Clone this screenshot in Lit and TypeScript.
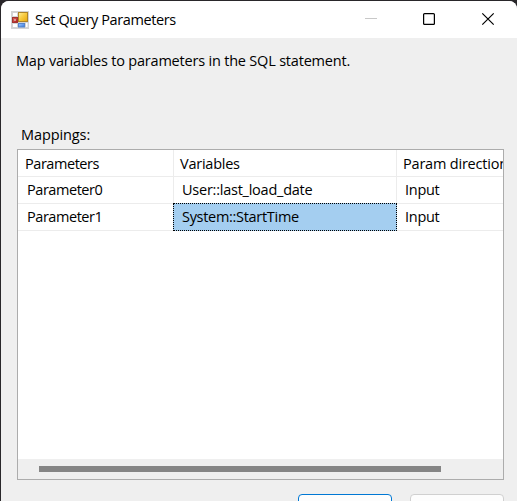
import { LitElement, html, css } from "lit";
import { customElement, property } from "lit/decorators.js";
import { classMap } from "lit/directives/class-map.js";

interface Mapping {
  parameter: string;
  variable: string;
  direction: string;
  selected?: boolean;
}

@customElement("title-bar")
class TitleBar extends LitElement {
  @property() heading = "";

  static styles = css`
    :host {
      display: flex;
      align-items: center;
      height: 37px;
      box-sizing: border-box;
      padding-left: 10px;
      background: #fff;
    }
    .logo { width: 18px; height: 18px; flex: none; }
    .heading {
      flex: 1;
      margin-left: 6px;
      line-height: 20px;
      letter-spacing: -0.4px;
      white-space: nowrap;
    }
    .controls { display: flex; }
    .control { width: 58px; height: 37px; display: block; }
    .middle { width: 59px; }
  `;

  render() {
    return html`
      <svg class="logo" viewBox="0 0 18 18">
        <defs>
          <linearGradient id="gold" x1="0" y1="0" x2="1" y2="1">
            <stop offset="0" stop-color="#fff0a0" />
            <stop offset=".45" stop-color="#f8cc42" />
            <stop offset="1" stop-color="#e6a60c" />
          </linearGradient>
          <linearGradient id="blue" x1="0" y1="0" x2="1" y2="1">
            <stop offset="0" stop-color="#a4ccff" />
            <stop offset="1" stop-color="#3274dc" />
          </linearGradient>
          <linearGradient id="red" x1="0" y1="0" x2="1" y2="1">
            <stop offset="0" stop-color="#e06a60" />
            <stop offset="1" stop-color="#a81818" />
          </linearGradient>
        </defs>
        <rect width="18" height="18" fill="#d3d3d3" />
        <path d="M2 2h4v3H2zM2 13h4v3H2zM15 12h1.500v4H15z" fill="#fff" />
        <rect x="7.500" y="1.500" width="9" height="9" fill="url(#gold)" stroke="#ae8426" />
        <rect x="1.500" y="6.500" width="5" height="5" fill="url(#red)" stroke="#a23230" />
        <path d="M3 8h2v2H3z" fill="#d99a94" />
        <rect x="7.500" y="12.500" width="6" height="3.500" fill="url(#blue)" stroke="#5685ca" />
      </svg>
      <div class="heading">${this.heading}</div>
      <div class="controls">
        <svg class="control" viewBox="0 0 58 37">
          <path d="M23 17.500h12" stroke="#c8c8c8" />
        </svg>
        <svg class="control middle" viewBox="0 0 59 37">
          <rect x="23.600" y="12.600" width="10.800" height="10.800" rx="1" fill="none" stroke="#000" stroke-width="1.250" />
        </svg>
        <svg class="control" viewBox="0 0 58 37">
          <path d="M23.300 12.300l11.400 11.400M34.700 12.300l-11.400 11.400" stroke="#000" stroke-width="1.200" />
        </svg>
      </div>
    `;
  }
}

@customElement("mapping-grid")
class MappingGrid extends LitElement {
  @property({ attribute: false }) rows: Mapping[] = [];

  static styles = css`
    :host {
      display: flex;
      flex-direction: column;
      box-sizing: border-box;
      width: 487px;
      height: 331px;
      border: 1px solid #acacac;
      background: #fff;
      overflow: hidden;
    }
    .row {
      display: grid;
      grid-template-columns: 156px 223px 1fr;
      height: 27px;
      flex: none;
    }
    .cell {
      box-sizing: border-box;
      height: 27px;
      min-width: 0;
      overflow: hidden;
      white-space: nowrap;
      line-height: 26px;
      padding-left: 9px;
      border-right: 1px solid #ececec;
      border-bottom: 1px solid #ececec;
      letter-spacing: -0.45px;
    }
    .cell:last-child { border-right: 0; }
    .variable { margin-left: -1px; letter-spacing: -0.24px; }
    .direction { padding-left: 8px; letter-spacing: -0.28px; }
    .head .cell { padding-left: 7px; line-height: 28px; }
    .head .direction { padding-left: 6px; letter-spacing: -0.2px; }
    .selected {
      margin: -1px 0 0 -1px;
      height: 28px;
      padding-left: 8px;
      border: 1px dotted #000;
      background: #a4cef0;
      letter-spacing: -0.3px;
      z-index: 1;
    }
    .space { flex: 1; }
    .scroll {
      height: 20px;
      box-sizing: border-box;
      background: #efefef;
      padding: 7px 62px 0 21px;
    }
    .thumb { height: 6px; background: #858585; }
  `;

  render() {
    return html`
      <div class="row head">
        <div class="cell">Parameters</div>
        <div class="cell variable">Variables</div>
        <div class="cell direction">Param direction</div>
      </div>
      ${this.rows.map(
        (row) => html`
          <div class="row">
            <div class="cell">${row.parameter}</div>
            <div class=${classMap({ cell: true, variable: true, selected: !!row.selected })}>${row.variable}</div>
            <div class="cell direction">${row.direction}</div>
          </div>
        `
      )}
      <div class="space"></div>
      <div class="scroll"><div class="thumb"></div></div>
    `;
  }
}

@customElement("app-root")
class AppRoot extends LitElement {
  static styles = css`
    :host {
      display: block;
      box-sizing: border-box;
      width: 517px;
      height: 501px;
      padding: 1px 0 0 1px;
      overflow: hidden;
      background: #29272a;
      color: #000;
      font: 14.5px "Open Sans", "Noto Sans", sans-serif;
    }
    .window {
      height: 500px;
      overflow: hidden;
      border-radius: 8px 8px 0 0;
      background: #efefef;
    }
    .intro {
      margin: 13px 0 0 15px;
      line-height: 20px;
      letter-spacing: -0.2px;
      white-space: nowrap;
    }
    .label {
      margin: 54px 0 4px 20px;
      line-height: 20px;
      letter-spacing: -0.1px;
    }
    mapping-grid { margin-left: 16px; }
    .actions {
      display: flex;
      gap: 18px;
      margin: 14px 0 0 297px;
    }
    .button {
      box-sizing: border-box;
      width: 94px;
      height: 30px;
      border: 1px solid #d0d0d0;
      border-radius: 4px;
      background: #fdfdfd;
    }
    .primary { border-color: #0078d4; }
  `;

  private rows: Mapping[] = [
    { parameter: "Parameter0", variable: "User::last_load_date", direction: "Input" },
    { parameter: "Parameter1", variable: "System::StartTime", direction: "Input", selected: true },
  ];

  render() {
    return html`
      <div class="window">
        <title-bar heading="Set Query Parameters"></title-bar>
        <div class="intro">Map variables to parameters in the SQL statement.</div>
        <div class="label">Mappings:</div>
        <mapping-grid .rows=${this.rows}></mapping-grid>
        <div class="actions">
          <div class="button primary"></div>
          <div class="button"></div>
        </div>
      </div>
    `;
  }
}
